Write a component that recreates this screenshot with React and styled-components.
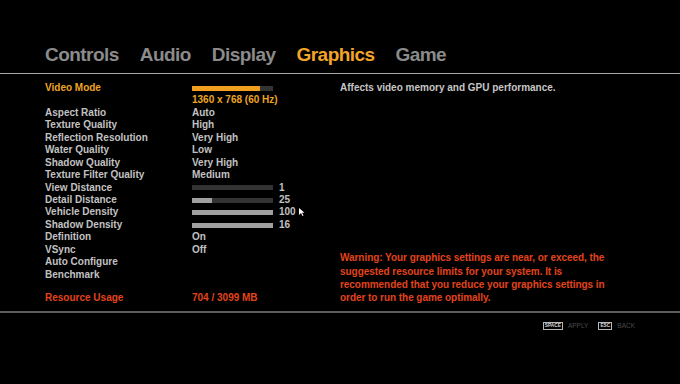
import React from 'react';
import styled, { createGlobalStyle } from 'styled-components';

const tabs = ['Controls', 'Audio', 'Display', 'Graphics', 'Game'];

const settings = [
  { label: 'Video Mode', kind: 'bar', fill: 84, accent: true },
  { label: '', value: '1360 x 768 (60 Hz)', accent: true },
  { label: 'Aspect Ratio', value: 'Auto' },
  { label: 'Texture Quality', value: 'High' },
  { label: 'Reflection Resolution', value: 'Very High' },
  { label: 'Water Quality', value: 'Low' },
  { label: 'Shadow Quality', value: 'Very High' },
  { label: 'Texture Filter Quality', value: 'Medium' },
  { label: 'View Distance', kind: 'bar', fill: 0, value: '1' },
  { label: 'Detail Distance', kind: 'bar', fill: 25, value: '25' },
  { label: 'Vehicle Density', kind: 'bar', fill: 100, value: '100', cursor: true },
  { label: 'Shadow Density', kind: 'bar', fill: 100, value: '16' },
  { label: 'Definition', value: 'On' },
  { label: 'VSync', value: 'Off' },
  { label: 'Auto Configure', value: '' },
  { label: 'Benchmark', value: '' },
];

export default function App() {
  return (
    <Screen>
      <GlobalStyle />
      <TabBar>
        {tabs.map(t => (
          <Tab key={t} active={t === 'Graphics'}>{t}</Tab>
        ))}
      </TabBar>
      <Content>
        <LeftPane>
          {settings.map((s, i) => (
            <Row key={i}>
              <Label accent={s.accent}>{s.label}</Label>
              {s.kind === 'bar' ? (
                <ValueCell>
                  <Track>
                    <Fill accent={s.accent} style={{ width: s.fill + '%' }} />
                  </Track>
                  {s.value && <Value>{s.value}</Value>}
                  {s.cursor && (
                    <Cursor viewBox="0 0 6 8" width="6" height="8">
                      <path d="M0 0 L0 7 L2 5 L3.5 8 L4.5 7.5 L3 4.7 L5.5 4.7 Z" fill="#fff" />
                    </Cursor>
                  )}
                </ValueCell>
              ) : (
                <Value accent={s.accent}>{s.value}</Value>
              )}
            </Row>
          ))}
          <UsageRow>
            <Label red>Resource Usage</Label>
            <Value red>704 / 3099 MB</Value>
          </UsageRow>
        </LeftPane>
        <RightPane>
          <Help>Affects video memory and GPU performance.</Help>
          <Warning>
            Warning: Your graphics settings are near, or exceed, the<br />
            suggested resource limits for your system. It is<br />
            recommended that you reduce your graphics settings in<br />
            order to run the game optimally.
          </Warning>
        </RightPane>
      </Content>
      <Footer>
        <Key>SPACE</Key>
        <Hint>APPLY</Hint>
        <Key>ESC</Key>
        <Hint>BACK</Hint>
      </Footer>
    </Screen>
  );
}

const GlobalStyle = createGlobalStyle`
  html, body {
    margin: 0;
    padding: 0;
    background: #000;
  }
`;

const Screen = styled.div`
  width: 680px;
  height: 384px;
  background: #000;
  font-family: 'Liberation Sans', Arial, sans-serif;
  font-weight: 700;
  display: flex;
  flex-direction: column;
  overflow: hidden;
`;

const TabBar = styled.div`
  display: flex;
  gap: 21px;
  padding: 44px 0 7px 45px;
  border-bottom: 1px solid #a8a8a8;
`;

const Tab = styled.div`
  font-size: 19px;
  line-height: 22px;
  letter-spacing: -0.55px;
  color: ${p => (p.active ? '#f2a526' : '#8b8b8b')};
`;

const Content = styled.div`
  display: flex;
  padding: 8px 0 7px 45px;
  border-bottom: 2px solid #5e5e5e;
`;

const LeftPane = styled.div`
  width: 295px;
  display: flex;
  flex-direction: column;
`;

const Row = styled.div`
  display: grid;
  grid-template-columns: 147px 1fr;
  height: 12.45px;
  align-items: center;
  font-size: 10px;
  line-height: 12.45px;
`;

const UsageRow = styled(Row)`
  margin-top: 10.5px;
`;

const Label = styled.div`
  white-space: nowrap;
  color: ${p => (p.red ? '#e2441c' : p.accent ? '#eea424' : '#c2c2c2')};
`;

const Value = styled.div`
  white-space: nowrap;
  color: ${p => (p.red ? '#e2441c' : p.accent ? '#eea424' : '#c2c2c2')};
`;

const ValueCell = styled.div`
  position: relative;
  display: flex;
  align-items: center;
  gap: 6px;
`;

const Track = styled.div`
  width: 81px;
  height: 5px;
  background: #333;
`;

const Fill = styled.div`
  height: 100%;
  background: ${p => (p.accent ? '#f0a01e' : '#a0a0a0')};
`;

const Cursor = styled.svg`
  position: absolute;
  left: 107px;
  top: 2px;
`;

const RightPane = styled.div`
  flex: 1;
  display: flex;
  flex-direction: column;
  justify-content: space-between;
  font-size: 10px;
`;

const Help = styled.div`
  line-height: 12.45px;
  color: #c6c6c6;
`;

const Warning = styled.div`
  line-height: 13.3px;
  color: #e2441c;
  margin-bottom: -0.5px;
  letter-spacing: -0.05px;
`;

const Footer = styled.div`
  display: flex;
  align-items: center;
  justify-content: flex-end;
  padding: 9px 45px 0 0;
  font-size: 6.5px;
  font-weight: 400;
`;

const Key = styled.span`
  border: 1px solid #b8b8b8;
  color: #d8d8d8;
  font-size: 4.8px;
  font-weight: 700;
  line-height: 6px;
  padding: 0 1px;
  margin-right: 5px;
`;

const Hint = styled.span`
  color: #4a4a4a;
  margin-right: 10px;
  &:last-child {
    margin-right: 0;
  }
`;
